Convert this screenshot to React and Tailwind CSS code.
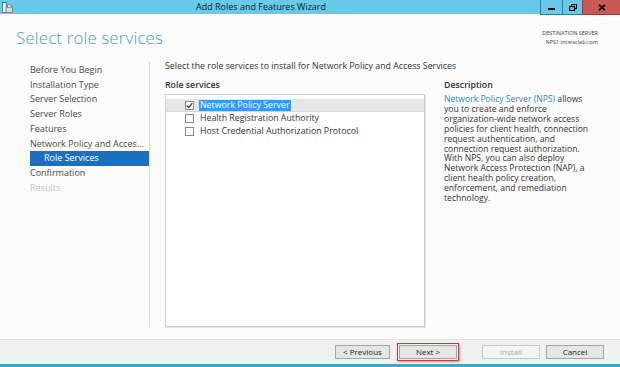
import React from "react";

const navItems = [
  "Before You Begin",
  "Installation Type",
  "Server Selection",
  "Server Roles",
  "Features",
  "Network Policy and Acces...",
];

const descLines = [
  "you to create and enforce",
  "organization-wide network access",
  "policies for client health, connection",
  "request authentication, and",
  "connection request authorization.",
  "With NPS, you can also deploy",
  "Network Access Protection (NAP), a",
  "client health policy creation,",
  "enforcement, and remediation",
  "technology.",
];

function Checkbox({ checked }) {
  return (
    <span className="w-[9px] h-[9px] border border-[#8a8a8a] bg-white flex items-center justify-center shrink-0">
      {checked && (
        <svg width="7" height="7" viewBox="0 0 7 7">
          <path d="M0.8 3.6 L2.8 5.5 L6.2 1.2" fill="none" stroke="#333" strokeWidth="1.2" />
        </svg>
      )}
    </span>
  );
}

function Btn({ children, disabled }) {
  return (
    <div
      className={
        "h-[14px] flex items-center justify-center border text-[8px] leading-none " +
        (disabled
          ? "border-[#c8c8c8] bg-[#f4f4f4] text-[#a8a8a8]"
          : "border-[#a5a5a5] bg-[#e5e5e5] text-[#222]")
      }
    >
      {children}
    </div>
  );
}

export default function App() {
  return (
    <div className="w-[620px] h-[367px] flex flex-col bg-[#fbfbfb] overflow-hidden font-['Open_Sans',sans-serif] text-[#333]">
      {/* Title bar */}
      <div className="h-[14px] shrink-0 flex items-start bg-[#68c9e8] relative z-10">
        <div className="w-[14px] h-[14px] flex items-center justify-center">
          <svg width="11" height="11" viewBox="0 0 11 11">
            <rect x="0.5" y="0.5" width="4" height="10" fill="#e8f4fb" stroke="#2f6f9f" strokeWidth="0.8" />
            <rect x="4" y="5" width="6.5" height="5.5" fill="#d8d8d8" stroke="#6f6f6f" strokeWidth="0.8" />
            <rect x="5.5" y="3" width="3.5" height="2.2" fill="#f0f0f0" stroke="#6f6f6f" strokeWidth="0.6" />
          </svg>
        </div>
        <div className="flex-1 text-center text-[9px] leading-[14px] text-[#1a1a1a] pr-[32px]">
          Add Roles and Features Wizard
        </div>
        <div className="flex h-[15px]">
          <div className="w-[22px] h-[15px] border-l border-b border-[#2f7fa6] flex items-end justify-center pb-[4px]">
            <div className="w-[7px] h-[2px] bg-black" />
          </div>
          <div className="w-[20px] h-[15px] border-l border-b border-[#2f7fa6] flex items-center justify-center">
            <svg width="8" height="7" viewBox="0 0 8 7">
              <rect x="2.5" y="0.5" width="5" height="4" fill="none" stroke="#000" strokeWidth="1" />
              <rect x="0.5" y="2.5" width="5" height="4" fill="#68c9e8" stroke="#000" strokeWidth="1.2" />
            </svg>
          </div>
          <div className="w-[38px] h-[15px] border-l border-b border-[#9a3b3b] bg-[#c75a52] flex items-center justify-center">
            <svg width="8" height="7" viewBox="0 0 8 7">
              <path d="M1 0.8 L7 6.2 M7 0.8 L1 6.2" stroke="#000" strokeWidth="1.6" />
            </svg>
          </div>
        </div>
      </div>

      {/* Header */}
      <div className="h-[48px] shrink-0 flex justify-between items-start px-[16px] pt-[13px] pr-[22px]">
        <div className="text-[17px] leading-[22px] font-light text-[#4f9dcb] tracking-[0.1px]">
          Select role services
        </div>
        <div className="text-right text-[5.5px] leading-[9px] text-[#444] pt-[2px]">
          <div>DESTINATION SERVER</div>
          <div>NPS1.inceisclab.com</div>
        </div>
      </div>

      {/* Body */}
      <div className="flex-1 flex min-h-0">
        {/* Nav */}
        <div className="w-[150px] shrink-0 pl-[30px] pb-[12px] flex">
          <div className="flex-1 flex flex-col text-[9px] leading-[14.7px] text-[#4a4a4a] pt-[1px]">
            {navItems.map((t) => (
              <div key={t} className="whitespace-nowrap">{t}</div>
            ))}
            <div className="bg-[#1a6fbf] text-white pl-[14px]">Role Services</div>
            <div>Confirmation</div>
            <div className="text-[#c4c4c4]">Results</div>
          </div>
          <div className="w-[1px] bg-[#dcdcdc]" />
        </div>

        {/* Content */}
        <div className="flex-1 flex flex-col pl-[15px] pb-[12px]">
          <div className="text-[8.8px] leading-[12px] mt-[-2px] text-[#333] whitespace-nowrap">
            Select the role services to install for Network Policy and Access Services
          </div>
          <div className="flex flex-1 mt-[7px]">
            <div className="w-[260px] flex flex-col">
              <div className="text-[8.8px] leading-[12px] font-semibold text-[#333]">Role services</div>
              <div className="flex-1 mt-[3px] border border-[#cfcfcf] bg-white pt-[4px] shadow-[1px_1px_0_#e4e4e4]">
                <div className="h-[13px] flex items-center bg-[#e6e6e6] border-b border-[#d6d6d6] pl-[19px] gap-[5px]">
                  <Checkbox checked />
                  <span className="text-[8.8px] leading-[11px] bg-[#3399ff] text-white px-[1px]">Network Policy Server</span>
                </div>
                <div className="h-[13px] flex items-center pl-[19px] gap-[5px]">
                  <Checkbox />
                  <span className="text-[8.8px] leading-[11px] px-[1px]">Health Registration Authority</span>
                </div>
                <div className="h-[12px] flex items-center pl-[19px] gap-[5px]">
                  <Checkbox />
                  <span className="text-[8.8px] leading-[11px] px-[1px]">Host Credential Authorization Protocol</span>
                </div>
              </div>
            </div>
            <div className="pl-[19px] flex flex-col">
              <div className="text-[8.8px] leading-[12px] font-semibold text-[#333]">Description</div>
              <div className="text-[8.6px] leading-[9.9px] mt-[4px] text-[#333] whitespace-nowrap">
                <div>
                  <span className="text-[#2a8cbf]">Network Policy Server (NPS)</span> allows
                </div>
                {descLines.map((l) => (
                  <div key={l}>{l}</div>
                ))}
              </div>
            </div>
          </div>
        </div>
      </div>

      {/* Footer */}
      <div className="h-[25px] shrink-0 bg-[#f0f0f0] border-t border-[#e2e2e2] flex items-center justify-end pr-[16px]">
        <div className="w-[55px] mr-[7px]"><Btn>&lt; Previous</Btn></div>
        <div className="w-[62px] mr-[23px] border-[1.5px] border-[#d3343a] p-[1px] shadow-[1px_1px_2px_rgba(0,0,0,0.3)]">
          <Btn>Next &gt;</Btn>
        </div>
        <div className="w-[58px] mr-[6px]"><Btn disabled>Install</Btn></div>
        <div className="w-[58px]"><Btn>Cancel</Btn></div>
      </div>
      <div className="h-[3px] shrink-0 bg-[#3fa7c9]" />
    </div>
  );
}
